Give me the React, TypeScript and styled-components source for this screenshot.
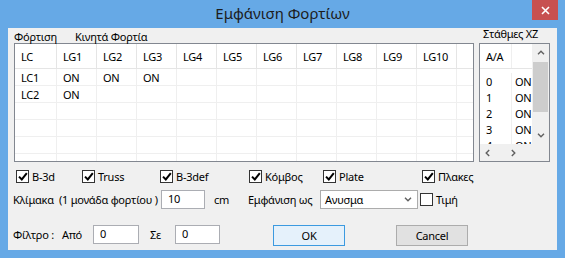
import React from "react";
import styled, { createGlobalStyle } from "styled-components";

const GlobalStyle = createGlobalStyle`
  html, body {
    margin: 0;
    padding: 0;
  }
  body {
    width: 565px;
    height: 258px;
    overflow: hidden;
    background: #66a9e6;
    font-family: "Noto Sans", "DejaVu Sans", sans-serif;
    font-size: 11px;
    letter-spacing: -0.25px;
    color: #000;
  }
`;

const Window = styled.div`
  width: 565px;
  height: 258px;
  box-sizing: border-box;
  padding: 0 8px 8px;
  display: flex;
  flex-direction: column;
  background: #66a9e6;
`;

const TitleBar = styled.div`
  position: relative;
  height: 28px;
  display: flex;
  align-items: center;
  justify-content: center;
`;

const Title = styled.span`
  font-size: 15px;
  letter-spacing: 0;
  color: #1c1c1c;
  margin-top: -2px;
`;

const CloseButton = styled.div`
  position: absolute;
  top: 0;
  right: -1px;
  width: 26px;
  height: 20px;
  background: #c75050;
  display: flex;
  align-items: center;
  justify-content: center;
`;

const Panel = styled.div`
  flex: 1;
  background: #f0f0f0;
  display: flex;
  flex-direction: column;
`;

const TopSection = styled.div`
  display: flex;
  gap: 5px;
  padding-left: 6px;
`;

const Group = styled.div<{ $w: number }>`
  width: ${(p) => p.$w}px;
  display: flex;
  flex-direction: column;
`;

const Captions = styled.div`
  height: 15px;
  display: flex;
  align-items: center;
  white-space: pre;
  line-height: 15px;
`;

const Caption = styled.span<{ $w?: number; $pad?: number }>`
  display: inline-block;
  width: ${(p) => (p.$w ? `${p.$w}px` : "auto")};
  padding-left: ${(p) => p.$pad ?? 0}px;
  position: relative;
  top: ${(p) => (p.$pad ? -2 : 1)}px;
`;

const ListBox = styled.div`
  height: 119px;
  box-sizing: border-box;
  border: 1px solid #828790;
  background: #fff;
  overflow: hidden;
`;

const Grid = styled.div`
  display: grid;
  grid-template-columns: 42px repeat(10, 40px) 1fr;
`;

const HeadCell = styled.div<{ $last?: boolean }>`
  box-sizing: border-box;
  height: 25px;
  padding-left: 6px;
  display: flex;
  align-items: center;
  border-right: ${(p) => (p.$last ? "none" : "1px solid #e5e5e5")};
  border-bottom: 1px solid #e5e5e5;
`;

const Cell = styled.div<{ $last?: boolean }>`
  box-sizing: border-box;
  height: 17px;
  padding-left: 6px;
  display: flex;
  align-items: center;
  border-right: ${(p) => (p.$last ? "none" : "1px solid #efefef")};
  border-bottom: 1px solid #efefef;
`;

const StationBox = styled(ListBox)`
  display: grid;
  grid-template-columns: 1fr 17px;
  grid-template-rows: 1fr 17px;
`;

const StationList = styled.div`
  overflow: hidden;
  display: flex;
  flex-direction: column;
`;

const StationHead = styled.div`
  display: grid;
  grid-template-columns: 32px 40px;
  height: 25px;
  box-sizing: border-box;
  border-bottom: 1px solid #e5e5e5;
  flex-shrink: 0;
`;

const StationRows = styled.div`
  display: grid;
  grid-template-columns: 32px 40px;
  grid-auto-rows: 16px;
  padding-top: 4px;
`;

const StationCell = styled.div<{ $sep?: boolean }>`
  box-sizing: border-box;
  padding-left: ${(p) => (p.$sep ? 6 : 3)}px;
  display: flex;
  align-items: center;
  white-space: nowrap;
  border-right: ${(p) => (p.$sep ? "1px solid #efefef" : "none")};
`;

const VScroll = styled.div`
  grid-row: 1;
  grid-column: 2;
  background: #f0f0f0;
  display: flex;
  flex-direction: column;
  align-items: center;
`;

const ArrowSlot = styled.div`
  width: 17px;
  height: 17px;
  display: flex;
  align-items: center;
  justify-content: center;
`;

const Thumb = styled.div`
  width: 15px;
  height: 50px;
  margin-top: 1px;
  background: #cdcdcd;
`;

const Filler = styled.div`
  flex: 1;
`;

const HScroll = styled.div`
  grid-row: 2;
  grid-column: 1;
  background: #f0f0f0;
  display: flex;
  align-items: center;
  gap: 21px;
  padding-left: 5px;
`;

const Corner = styled.div`
  grid-row: 2;
  grid-column: 2;
  background: #f0f0f0;
`;

const Row = styled.div<{ $top: number; $h: number; $pad: number }>`
  display: flex;
  align-items: center;
  height: ${(p) => p.$h}px;
  margin-top: ${(p) => p.$top}px;
  padding-left: ${(p) => p.$pad}px;
  white-space: pre;
`;

const CheckItem = styled.label<{ $w?: number; $ml?: number }>`
  display: flex;
  align-items: center;
  gap: 3px;
  width: ${(p) => (p.$w ? `${p.$w}px` : "auto")};
  margin-left: ${(p) => p.$ml ?? 0}px;
`;

const Box = styled.span`
  width: 13px;
  height: 13px;
  box-sizing: border-box;
  border: 1px solid #333;
  background: #fff;
  display: flex;
  align-items: center;
  justify-content: center;
`;

const Text = styled.span<{ $w?: number; $ml?: number }>`
  display: inline-block;
  width: ${(p) => (p.$w ? `${p.$w}px` : "auto")};
  margin-left: ${(p) => p.$ml ?? 0}px;
`;

const Input = styled.div<{ $w: number }>`
  width: ${(p) => p.$w}px;
  height: 19px;
  box-sizing: border-box;
  border: 1px solid #abadb3;
  background: #fff;
  padding: 0 0 3px 6px;
  display: flex;
  align-items: center;
`;

const Select = styled(Input)`
  justify-content: space-between;
  padding-right: 5px;
  padding-left: 4px;
  padding-bottom: 1px;
  border-color: #acacac;
`;

const Button = styled.div<{ $w: number; $ml: number; $primary?: boolean }>`
  width: ${(p) => p.$w}px;
  height: 21px;
  margin-left: ${(p) => p.$ml}px;
  margin-top: 2px;
  box-sizing: border-box;
  border: 1px solid ${(p) => (p.$primary ? "#3c9ae0" : "#acacac")};
  background: ${(p) => (p.$primary ? "#e5f1fb" : "#e1e1e1")};
  display: flex;
  align-items: center;
  justify-content: center;
`;

const Check = () => (
  <svg width="10" height="9" viewBox="0 0 10 9">
    <path d="M1 4.6 L3.8 7.4 L8.8 1.2" fill="none" stroke="#000" strokeWidth="2" />
  </svg>
);

const Chevron = ({ up }: { up?: boolean }) => (
  <svg width="8" height="5" viewBox="0 0 8 5">
    <path d={up ? "M1 4.2 L4 1.2 L7 4.2" : "M1 0.8 L4 3.8 L7 0.8"} fill="none" stroke="#606060" strokeWidth="1.4" />
  </svg>
);

const SideChevron = ({ right }: { right?: boolean }) => (
  <svg width="5" height="8" viewBox="0 0 5 8">
    <path d={right ? "M0.8 1 L3.8 4 L0.8 7" : "M4.2 1 L1.2 4 L4.2 7"} fill="none" stroke="#606060" strokeWidth="1.4" />
  </svg>
);

const CheckBox = ({ label, w, ml, checked = true }: { label: string; w?: number; ml?: number; checked?: boolean }) => (
  <CheckItem $w={w} $ml={ml}>
    <Box>{checked && <Check />}</Box>
    <span>{label}</span>
  </CheckItem>
);

const headers = ["LC", "LG1", "LG2", "LG3", "LG4", "LG5", "LG6", "LG7", "LG8", "LG9", "LG10", ""];
const rows: string[][] = [
  ["LC1", "ON", "ON", "ON"],
  ["LC2", "ON"],
  [],
  [],
  [],
  [],
];

export default function App() {
  return (
    <>
      <GlobalStyle />
      <Window>
        <TitleBar>
          <Title>Εμφάνιση Φορτίων</Title>
          <CloseButton>
            <svg width="9" height="9" viewBox="0 0 9 9">
              <path d="M1 1 L8 8 M8 1 L1 8" stroke="#fff" strokeWidth="1.6" />
            </svg>
          </CloseButton>
        </TitleBar>
        <Panel>
          <TopSection>
            <Group $w={460}>
              <Captions>
                <Caption $w={61}>Φόρτιση</Caption>
                <Caption>Κινητά Φορτία</Caption>
              </Captions>
              <ListBox>
                <Grid>
                  {headers.map((h, i) => (
                    <HeadCell key={i} $last={i === headers.length - 1}>{h}</HeadCell>
                  ))}
                  {rows.map((r, ri) =>
                    headers.map((_, ci) => (
                      <Cell key={`${ri}-${ci}`} $last={ci === headers.length - 1}>{r[ci] ?? ""}</Cell>
                    ))
                  )}
                </Grid>
              </ListBox>
            </Group>
            <Group $w={71}>
              <Captions>
                <Caption $pad={4}>Στάθμες XZ</Caption>
              </Captions>
              <StationBox>
                <StationList>
                  <StationHead>
                    <StationCell $sep>A/A</StationCell>
                    <StationCell />
                  </StationHead>
                  <StationRows>
                    {["0", "1", "2", "3", "4"].map((n) => (
                      <React.Fragment key={n}>
                        <StationCell $sep>{n}</StationCell>
                        <StationCell>ON</StationCell>
                      </React.Fragment>
                    ))}
                  </StationRows>
                </StationList>
                <VScroll>
                  <ArrowSlot><Chevron up /></ArrowSlot>
                  <Thumb />
                  <Filler />
                  <ArrowSlot><Chevron /></ArrowSlot>
                </VScroll>
                <HScroll>
                  <SideChevron />
                  <SideChevron right />
                </HScroll>
                <Corner />
              </StationBox>
            </Group>
          </TopSection>

          <Row $top={6} $h={16} $pad={8}>
            <CheckBox label="B-3d" w={66} />
            <CheckBox label="Truss" w={78} />
            <CheckBox label="B-3def" w={89} />
            <CheckBox label="Κόμβος" w={74} />
            <CheckBox label="Plate" w={99} />
            <CheckBox label="Πλακες" />
          </Row>

          <Row $top={6} $h={19} $pad={5}>
            <Text $w={148}>Κλίμακα  (1 μονάδα φορτίου )</Text>
            <Input $w={44}>10</Input>
            <Text $w={34} $ml={9}>cm</Text>
            <Text $w={72}>Εμφάνιση ως</Text>
            <Select $w={98}>
              <span>Ανυσμα</span>
              <Chevron />
            </Select>
            <CheckBox label="Τιμή" ml={2} checked={false} />
          </Row>

          <Row $top={14} $h={23} $pad={5}>
            <Text $w={49}>Φίλτρο :</Text>
            <Text $w={31}>Από</Text>
            <Input $w={46}>0</Input>
            <Text $w={25} $ml={11}>Σε</Text>
            <Input $w={45}>0</Input>
            <Button $w={72} $ml={53} $primary>OK</Button>
            <Button $w={72} $ml={51}>Cancel</Button>
          </Row>
        </Panel>
      </Window>
    </>
  );
}
